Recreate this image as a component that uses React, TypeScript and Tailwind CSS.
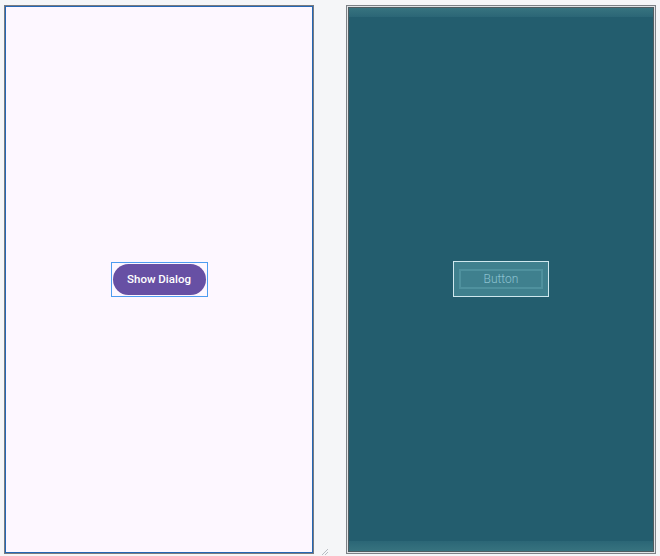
export default function App() {
  return (
    <div className="relative h-[556px] w-[660px] bg-[#f5f6f8] font-['Roboto',sans-serif]">
      <div className="flex gap-[32px] pl-[4px] pt-[5px]">
        {/* design surface */}
        <div className="h-[549px] w-[310px] border border-[#777b80]">
          <div className="flex h-full w-full items-center justify-center border-[1.5px] border-[#2567b5] bg-[#fdf7ff]">
            <div className="border border-[#4d9cf0] p-px">
              <button className="flex h-[31px] w-[93px] items-center justify-center rounded-full bg-[#6750a4] text-[11.5px] font-medium text-white">
                Show Dialog
              </button>
            </div>
          </div>
        </div>

        {/* blueprint */}
        <div className="h-[549px] w-[310px] border border-[#7d8186] bg-[#dfe3e6] p-px">
          <div className="flex h-full w-full flex-col border border-[#4f5c61] bg-[#235d6e]">
            <div className="h-[9px] bg-gradient-to-b from-[#37737f] to-[#2b6676]" />
            <div className="flex flex-1 items-center justify-center">
              <div className="flex h-[36px] w-[96px] items-center justify-center border border-[#cfe8ee] bg-[#3f808e]">
                <div className="flex h-[20px] w-[84px] items-center justify-center border-2 border-[#4f919e] text-[12px] font-light text-[#8cc2d0]">
                  Button
                </div>
              </div>
            </div>
            <div className="h-[10px] bg-gradient-to-b from-[#2b6676] to-[#37737f]" />
          </div>
        </div>
      </div>
      <svg className="absolute left-[321px] top-[548px]" width="8" height="8" viewBox="0 0 8 8">
        <path d="M1 7 L7 1 M4 7 L7 4" stroke="#b8bcc2" strokeWidth="1" />
      </svg>
    </div>
  );
}
